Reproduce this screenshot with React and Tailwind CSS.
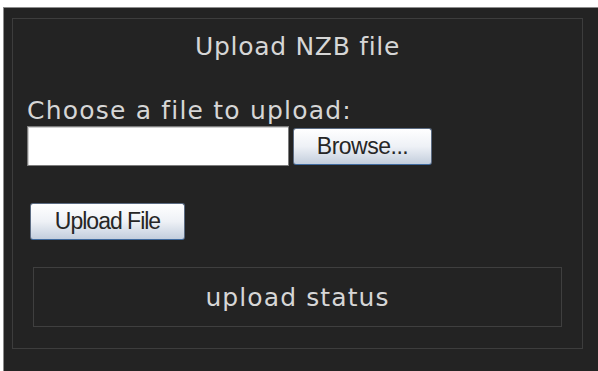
import React from 'react';

const panelFont = { fontFamily: '"DejaVu Sans", Verdana, sans-serif' };
const btnFont = { fontFamily: '"Liberation Sans", Arial, sans-serif' };

const UploadNzb = () => {
  return (
    <div className="h-[371px] w-[598px] overflow-hidden bg-white pt-[7px] pl-[3px]">
      <div
        className="h-full border-t border-l border-[#8c8c8c] bg-[#232323] pt-[10px] pl-[8px]"
        style={panelFont}
      >
        {/* panel */}
        <div className="h-[331px] w-[571px] border border-[#3d3d3d] pl-[14px] text-[#d6d6d6]">
          <h2 className="mt-[13px] pr-[14px] text-center text-[25px] leading-[30px] font-normal tracking-[0.7px]">
            Upload NZB file
          </h2>

          <p className="mt-[34px] text-[25px] leading-[30px] tracking-[1.2px]">
            Choose a file to upload:
          </p>

          <div className="flex items-start gap-[4px]">
            <div className="h-[40px] w-[262px] border border-[#7c7c7c] bg-white shadow-[inset_1px_1px_0_#d0d0d0]" />
            <button
              className="mt-[2px] flex h-[37px] w-[139px] items-center justify-center rounded-[3px] border border-[#5b6b82] border-b-[#3f6a9e] bg-gradient-to-b from-[#ffffff] via-[#eef1f6] to-[#c3cedd] text-[23px] tracking-[-0.5px] text-[#262626]"
              style={btnFont}
            >
              Browse...
            </button>
          </div>

          <button
            className="mt-[37px] ml-[3px] flex h-[37px] w-[155px] items-center justify-center rounded-[3px] border border-[#5b6b82] border-b-[#3f6a9e] bg-gradient-to-b from-[#ffffff] via-[#eef1f6] to-[#c3cedd] text-[23px] tracking-[-1px] text-[#262626]"
            style={btnFont}
          >
            Upload File
          </button>

          <div className="mt-[27px] ml-[6px] h-[60px] w-[529px] border border-[#3f3f3f] pt-[15px] text-center text-[25px] leading-[30px] tracking-[1.1px]">
            upload status
          </div>
        </div>
      </div>
    </div>
  );
};

export default function App() {
  return <UploadNzb />;
}
